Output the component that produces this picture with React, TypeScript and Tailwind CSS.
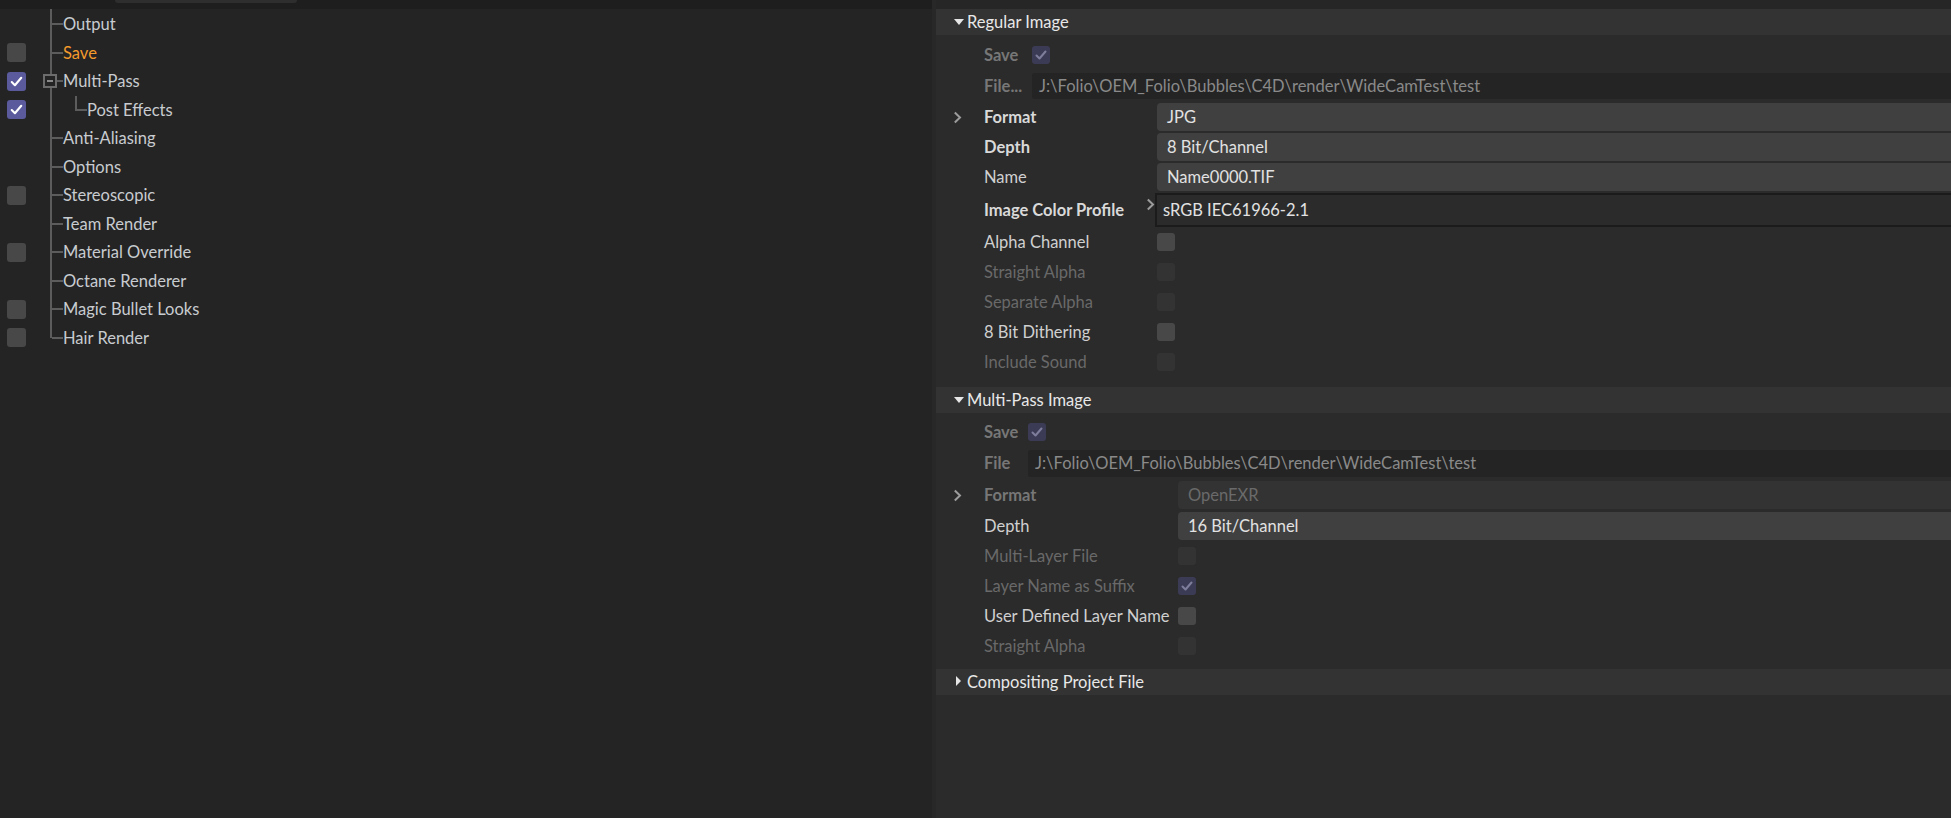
import React from "react";

type TreeItem = {
  label: string;
  check?: "on" | "off";
  active?: boolean;
  kind?: "minus" | "child" | "last";
};

const tree: TreeItem[] = [
  { label: "Output" },
  { label: "Save", check: "off", active: true },
  { label: "Multi-Pass", check: "on", kind: "minus" },
  { label: "Post Effects", check: "on", kind: "child" },
  { label: "Anti-Aliasing" },
  { label: "Options" },
  { label: "Stereoscopic", check: "off" },
  { label: "Team Render" },
  { label: "Material Override", check: "off" },
  { label: "Octane Renderer" },
  { label: "Magic Bullet Looks", check: "off" },
  { label: "Hair Render", check: "off", kind: "last" },
];

function Tick({ dim }: { dim?: boolean }) {
  return (
    <svg viewBox="0 0 18 18" className="w-full h-full">
      <path
        d="M4.5 9.5 L7.5 12.5 L13.5 5.5"
        fill="none"
        stroke={dim ? "#7e7e9c" : "#ffffff"}
        strokeWidth="2"
        strokeLinecap="round"
        strokeLinejoin="round"
      />
    </svg>
  );
}

function Box({ state }: { state: "on" | "off" | "dimOn" | "dimOff" }) {
  const cls = {
    on: "bg-[#5a5a9c]",
    off: "bg-[#484848]",
    dimOn: "bg-[#3b3b55]",
    dimOff: "bg-[#333333]",
  }[state];
  return (
    <div className={`w-[18px] h-[18px] rounded-[3px] ${cls}`}>
      {state === "on" && <Tick />}
      {state === "dimOn" && <Tick dim />}
    </div>
  );
}

function TreeRow({ item }: { item: TreeItem }) {
  return (
    <div className="flex items-center h-[28.5px]">
      <div className="w-[7px]" />
      <div className="w-[19px] h-[19px]">
        {item.check && (
          <div className={`w-[19px] h-[19px] rounded-[3px] ${item.check === "on" ? "bg-[#5a5a9c]" : "bg-[#484848]"}`}>
            {item.check === "on" && <Tick />}
          </div>
        )}
      </div>
      <div className="relative w-[37px] h-full">
        <div className={`absolute left-[24px] w-[2px] bg-[#5c5c5c] top-0 ${item.kind === "last" ? "h-1/2" : "h-full"}`} />
        {item.kind === "child" ? (
          <>
            <div className="absolute left-[49px] top-0 h-1/2 w-[2px] bg-[#5c5c5c]" />
            <div className="absolute left-[49px] top-[calc(50%-1px)] w-[12px] h-[2px] bg-[#5c5c5c]" />
          </>
        ) : (
          <div className="absolute left-[26px] top-[calc(50%-1px)] w-[11px] h-[2px] bg-[#5c5c5c]" />
        )}
        {item.kind === "minus" && (
          <div className="absolute left-[17px] top-[calc(50%-7px)] w-[14px] h-[14px] border-2 border-[#6c6c6c] bg-[#242424] flex items-center justify-center">
            <div className="w-[6px] h-[2px] bg-[#8a8a8a]" />
          </div>
        )}
      </div>
      <span
        className={`${item.kind === "child" ? "ml-[24px]" : ""} ${item.active ? "text-[#f39a2c]" : "text-[#c8ccd0]"}`}
      >
        {item.label}
      </span>
    </div>
  );
}

function Header({ label, open }: { label: string; open: boolean }) {
  return (
    <div className="flex items-center h-[26px] bg-[#333333] pl-[18px]">
      {open ? (
        <svg viewBox="0 0 10 6" className="w-[10px] h-[6px] mr-[3px]">
          <path d="M0 0 L10 0 L5 6 Z" fill="#e6e6e6" />
        </svg>
      ) : (
        <svg viewBox="0 0 5 10" className="w-[5px] h-[10px] ml-[2px] mr-[6px] -mt-[3px]">
          <path d="M0 0 L5 5 L0 10 Z" fill="#e6e6e6" />
        </svg>
      )}
      <span className="text-[#e8e8e8]">{label}</span>
    </div>
  );
}

function Chevron() {
  return (
    <svg viewBox="0 0 9 13" className="w-[9px] h-[13px]">
      <path d="M1.8 1.5 L7 6.5 L1.8 11.5" fill="none" stroke="#9c9c9c" strokeWidth="2" />
    </svg>
  );
}

function FieldRow({
  label,
  value,
  bold,
  col,
  chevron,
  dim,
  h,
}: {
  label: string;
  value: string;
  bold?: boolean;
  col: string;
  chevron?: boolean;
  dim?: boolean;
  h: string;
}) {
  return (
    <div className={`flex items-center ${h}`}>
      <div className="w-[48px] flex justify-start pl-[17px]">{chevron && <Chevron />}</div>
      <div
        className={`${col} ${bold ? "font-bold" : ""} ${dim ? "text-[#777777]" : bold ? "text-[#d9d9d9]" : "text-[#d0d0d0]"}`}
      >
        {label}
      </div>
      <div
        className={`flex-1 h-[28px] rounded-l-[4px] flex items-center pl-[10px] ${dim ? "bg-[#333333] text-[#6a6a6a]" : "bg-[#404040] text-[#e2e2e2]"}`}
      >
        {value}
      </div>
    </div>
  );
}

function CheckRow({
  label,
  state,
  col,
  dim,
}: {
  label: string;
  state: "off" | "dimOn" | "dimOff";
  col: string;
  dim?: boolean;
}) {
  return (
    <div className="flex items-center h-[30px]">
      <div className="w-[48px]" />
      <div className={`${col} ${dim ? "text-[#696969]" : "text-[#d0d0d0]"}`}>{label}</div>
      <Box state={state} />
    </div>
  );
}

export default function App() {
  return (
    <div className="w-[1951px] h-[818px] overflow-hidden flex bg-[#2b2b2b] font-['Lato',sans-serif] text-[16.5px] leading-none">
      {/* left tree */}
      <div className="w-[932px] shrink-0 bg-[#242424] flex flex-col">
        <div className="h-[9px] bg-[#1e1e1e] relative">
          <div className="absolute left-[115px] w-[182px] top-0 h-[3px] rounded-b-[3px] bg-[#2e2e2e]" />
        </div>
        <div className="relative pt-[1px]">
          <div className="absolute left-[50px] top-0 h-[1px] w-[2px] bg-[#5c5c5c]" />
          {tree.map((t) => (
            <TreeRow key={t.label} item={t} />
          ))}
        </div>
      </div>

      {/* strip */}
      <div className="w-[4px] shrink-0 bg-[#282828]" />

      {/* right attributes */}
      <div className="flex-1 flex flex-col">
        <div className="h-[9px] bg-[#262626]" />
        <Header label="Regular Image" open />
        <div className="pt-[5px]">
          <div className="flex items-center h-[30px]">
            <div className="w-[48px]" />
            <div className="w-[48px] font-bold text-[#777777]">Save</div>
            <Box state="dimOn" />
          </div>
          <div className="flex items-center h-[32px]">
            <div className="w-[48px]" />
            <div className="w-[48px] font-bold text-[#777777]">File...</div>
            <div className="flex-1 h-[26px] rounded-l-[3px] bg-[#242424] text-[#8a8a8a] flex items-center pl-[7px]">
              J:\Folio\OEM_Folio\Bubbles\C4D\render\WideCamTest\test
            </div>
          </div>
          <div className="flex flex-col gap-[2px] pt-[1px]">
            <FieldRow label="Format" value="JPG" bold chevron col="w-[173px]" h="h-[28px]" />
            <FieldRow label="Depth" value="8 Bit/Channel" bold col="w-[173px]" h="h-[28px]" />
            <FieldRow label="Name" value="Name0000.TIF" col="w-[173px]" h="h-[28px]" />
          </div>
          <div className="flex items-center h-[36px] pt-[2px]">
            <div className="w-[48px]" />
            <div className="w-[162px] font-bold text-[#d9d9d9]">Image Color Profile</div>
            <div className="w-[9px] -mt-[12px]">
              <Chevron />
            </div>
            <div className="flex-1 h-[34px] border-2 border-r-0 border-[#1b1b1b] bg-[#2b2b2b] text-[#e2e2e2] flex items-center pl-[6px]">
              sRGB IEC61966-2.1
            </div>
          </div>
          <CheckRow label="Alpha Channel" state="off" col="w-[173px]" />
          <CheckRow label="Straight Alpha" state="dimOff" dim col="w-[173px]" />
          <CheckRow label="Separate Alpha" state="dimOff" dim col="w-[173px]" />
          <CheckRow label="8 Bit Dithering" state="off" col="w-[173px]" />
          <CheckRow label="Include Sound" state="dimOff" dim col="w-[173px]" />
        </div>

        <div className="h-[10px]" />
        <Header label="Multi-Pass Image" open />
        <div className="pt-[4px]">
          <div className="flex items-center h-[30px]">
            <div className="w-[48px]" />
            <div className="w-[44px] font-bold text-[#777777]">Save</div>
            <Box state="dimOn" />
          </div>
          <div className="flex items-center h-[32px]">
            <div className="w-[48px]" />
            <div className="w-[44px] font-bold text-[#777777]">File</div>
            <div className="flex-1 h-[27px] rounded-l-[3px] bg-[#242424] text-[#8a8a8a] flex items-center pl-[7px]">
              J:\Folio\OEM_Folio\Bubbles\C4D\render\WideCamTest\test
            </div>
          </div>
          <FieldRow label="Format" value="OpenEXR" bold dim chevron col="w-[194px]" h="h-[32px]" />
          <FieldRow label="Depth" value="16 Bit/Channel" col="w-[194px]" h="h-[30px]" />
          <CheckRow label="Multi-Layer File" state="dimOff" dim col="w-[194px]" />
          <CheckRow label="Layer Name as Suffix" state="dimOn" dim col="w-[194px]" />
          <CheckRow label="User Defined Layer Name" state="off" col="w-[194px]" />
          <CheckRow label="Straight Alpha" state="dimOff" dim col="w-[194px]" />
        </div>

        <div className="h-[8px]" />
        <Header label="Compositing Project File" open={false} />
      </div>
    </div>
  );
}
